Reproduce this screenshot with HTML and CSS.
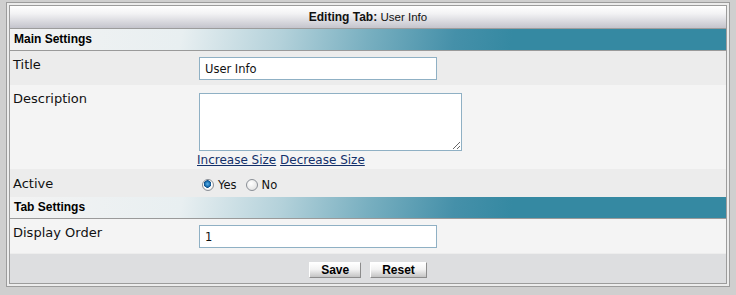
FILE: index.html
```html
<!DOCTYPE html>
<html lang="en">
<head>
    <meta charset="UTF-8">
    <title>Editing Tab: User Info</title>
    <link rel="stylesheet" href="styles.css">
</head>
<body>

    <div class="frame">
        <div class="panel">

            <div class="panel-head"><b>Editing Tab:</b> <span>User Info</span></div>

            <div class="section">Main Settings</div>

            <div class="row row-dark">
                <div class="label">Title</div>
                <div class="field field-input">
                    <input type="text" class="text-input" value="User Info">
                </div>
            </div>

            <div class="row row-light">
                <div class="label">Description</div>
                <div class="field field-area">
                    <textarea class="text-area"></textarea>
                    <div class="size-links"><a href="#">Increase Size</a> <a href="#">Decrease Size</a></div>
                </div>
            </div>

            <div class="row row-dark">
                <div class="label label-active">Active</div>
                <div class="field field-radios">
                    <label><input type="radio" name="active" checked> Yes</label>
                    <label><input type="radio" name="active"> No</label>
                </div>
            </div>

            <div class="section">Tab Settings</div>

            <div class="row row-light">
                <div class="label">Display Order</div>
                <div class="field field-input">
                    <input type="text" class="text-input" value="1">
                </div>
            </div>

            <div class="footer">
                <button type="button">Save</button>
                <button type="button">Reset</button>
            </div>

        </div>
    </div>

</body>
</html>
```

FILE: styles.css
```css
body {
    margin: 0;
    background-color: #cfcfcf;
    font-family: "DejaVu Sans", Verdana, sans-serif;
    color: #111;
}


.frame {
    margin: 2px 6px 0 6px;
    border: 1px solid #9c9c9c;
    background-color: #ececec;
    padding: 2px;
}

.panel {
    border: 1px solid #9c9c9c;
    background-color: #ececec;
}


.panel-head {
    height: 22px;
    line-height: 22px;
    text-align: center;
    font-family: "Liberation Sans", Arial, sans-serif;
    font-size: 12px;
    background: linear-gradient(#ffffff, #f2f2f4 35%, #c4c4cc);
    border-bottom: 1px solid #9c9c9c;
}

.panel-head span {
    font-size: 11.5px;
}


.section {
    height: 21px;
    line-height: 21px;
    padding-left: 4px;
    font-family: "Liberation Sans", Arial, sans-serif;
    font-size: 12px;
    font-weight: bold;
    color: #000;
    background: linear-gradient(100deg, #f3f3f3 0%, #e8eff1 24%, #b3d1da 38%, #78afc0 50%, #4590a9 62%, #3589a2 70%, #3589a2 100%);
    border-bottom: 1px solid #9a9a9a;
}


.row {
    display: flex;
    align-items: flex-start;
}

.row-dark {
    background-color: #ececec;
}

.row-light {
    background-color: #f4f4f4;
}

.label {
    width: 181px;
    padding: 6px 3px 0;
    font-size: 13px;
    line-height: 15px;
}

.label-active {
    padding-top: 7px;
}

.field {
    flex: 1;
}

.field-input {
    padding: 6px 0 5px 2px;
}

.field-area {
    padding: 6px 0 1px;
}

.field-radios {
    display: flex;
    align-items: center;
    height: 14px;
    padding: 9px 0 5px;
    font-size: 11.5px;
}


.text-input {
    display: block;
    box-sizing: border-box;
    width: 238px;
    height: 23px;
    margin: 0;
    padding: 0 5px;
    border: 1px solid #8fb0c4;
    background-color: #fff;
    font-family: "DejaVu Sans", Verdana, sans-serif;
    font-size: 11.5px;
    color: #111;
    outline: none;
}

.text-area {
    display: block;
    box-sizing: border-box;
    width: 263px;
    height: 58px;
    margin: 2px 0 1px 2px;
    border: 1px solid #8fb0c4;
    background-color: #fff;
    outline: none;
}

.size-links {
    font-size: 12px;
    line-height: 16px;
}

.size-links a {
    color: #13306a;
    text-decoration: underline;
}


.field-radios label {
    display: flex;
    align-items: center;
    margin-right: 4px;
}

.field-radios input {
    appearance: none;
    width: 12px;
    height: 12px;
    margin: 0 4px 0 5px;
    border: 1px solid #8a8f96;
    border-radius: 50%;
    background: radial-gradient(circle at 40% 35%, #ffffff, #dcdcdc);
}

.field-radios input:checked {
    background: radial-gradient(circle at 45% 40%, #5fb4ec 0, #1a6fb0 2.5px, #0f4d86 3.5px, #ffffff 4px, #d8d8d8 100%);
}


.footer {
    display: flex;
    justify-content: center;
    gap: 9px;
    height: 21px;
    padding-top: 8px;
    border-top: 1px solid #ededed;
    background-color: #dddee0;
}

.footer button {
    height: 16px;
    padding: 0 11px;
    border: 1px solid;
    border-color: #ffffff #8c8c8c #8c8c8c #ffffff;
    background: linear-gradient(#ffffff, #f3f3f3 45%, #c4c4c4);
    font-family: "Liberation Sans", Arial, sans-serif;
    font-size: 12px;
    font-weight: bold;
    line-height: 14px;
    color: #000;
    cursor: pointer;
}
```
